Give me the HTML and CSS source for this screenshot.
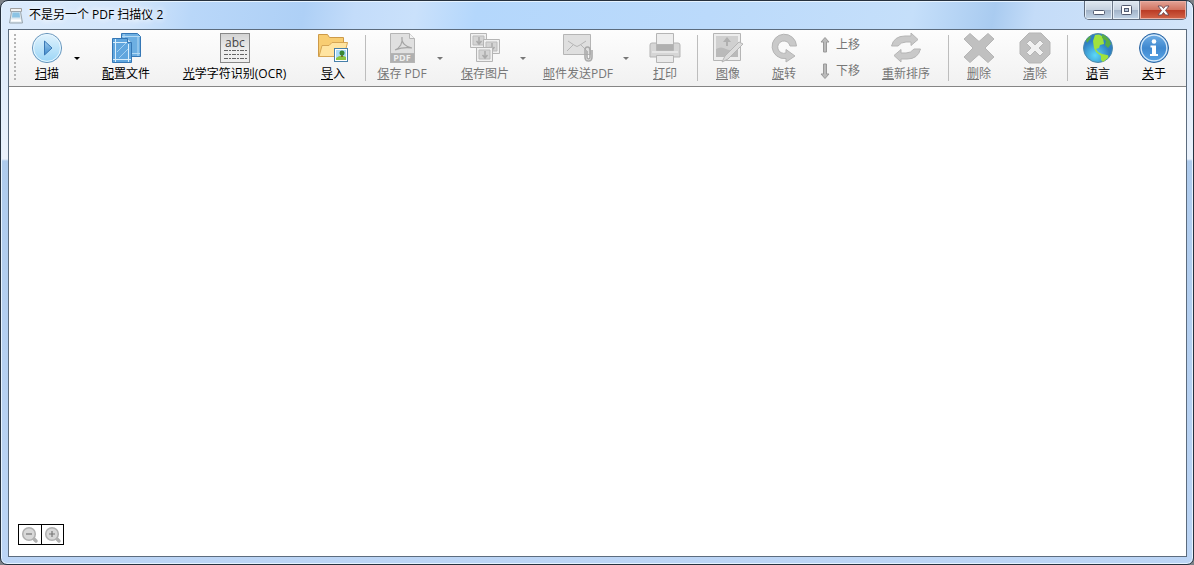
FILE: index.html
```html
<!DOCTYPE html>
<html lang="zh-CN">
<head>
<meta charset="utf-8">
<meta name="viewport" content="width=device-width, initial-scale=1">
<title>不是另一个 PDF 扫描仪 2</title>
<link rel="stylesheet" href="styles.css">
</head>
<body>
<div class="window">
  <header class="titlebar">
    <svg class="app-icon" viewBox="0 0 16 17"><path d="M2.500 1.500h11v3h-11z" fill="#f2f2f2" stroke="#a0a0a0"/><path d="M3.500 4.500h9l2 11.500h-13z" fill="#dce7ef" stroke="#9aa6af"/><path d="M4.500 5.500h7l.5 5h-8z" fill="#8bc3e4"/><path d="M3 13.500h10" stroke="#fff" stroke-width="2"/></svg>
    <h1 class="title">不是另一个 PDF 扫描仪 2</h1>
    <div class="caption">
      <button class="cap" type="button" aria-label="最小化"><svg width="14" height="10" viewBox="0 0 14 10"><rect x="1.500" y="5.500" width="11" height="4" rx="1" fill="#fff" stroke="#535b70"/></svg></button>
      <button class="cap" type="button" aria-label="还原"><svg width="13" height="10" viewBox="0 0 13 10"><rect x="1.500" y=".5" width="10" height="9" rx="1" fill="#fff" stroke="#535b70"/><rect x="4.500" y="3.500" width="4" height="3" fill="#b9c8da" stroke="#535b70"/></svg></button>
      <button class="cap cap-close" type="button" aria-label="关闭"><svg width="13" height="11" viewBox="0 0 13 11"><path d="M1 1h3.500l2 2.500L8.500 1H12L8.500 5.500 12 10H8.500l-2-2.500-2 2.500H1l3.500-4.500z" fill="#fff" stroke="#694853" stroke-width=".9"/></svg></button>
    </div>
  </header>

  <main class="client">
    <div class="toolbar" role="toolbar">
      <span class="grip"></span>
      <div class="split">
        <button class="tool tool-xs" type="button">
          <svg class="icon" viewBox="0 0 32 32"><defs><linearGradient id="scan" x2="0" y2="1"><stop stop-color="#e2f3fd"/><stop offset="1" stop-color="#9ad5f6"/></linearGradient><linearGradient id="tri" x2="0" y2="1"><stop stop-color="#9fcdef"/><stop offset="1" stop-color="#3f8acb"/></linearGradient></defs><circle cx="16" cy="16" r="14.600" fill="url(#scan)" stroke="#6b97bd"/><circle cx="16" cy="16" r="13.400" fill="none" stroke="#e6f6ff"/><path d="M13.500 9v14l7.500-7z" fill="url(#tri)" stroke="#3a78b5"/></svg>
          <span class="label"><u>扫</u>描</span></button>
        <button class="drop" type="button" aria-label="扫描选项"></button>
      </div>
      <button class="tool tool-l" type="button">
        <svg class="icon" viewBox="0 0 32 32"><g stroke="#3577b5"><path d="M11.500 1.500h16l3 3v20h-19z" fill="#6dafe2"/><path d="M14 2v22M28 4v20M12 4.500h18M12 21.500h18" stroke="#b5daf4"/><path d="M2.500 6.500h15l4 4v20h-19z" fill="#60a6de"/><path d="M17.500 6.500v4h4" fill="#c8e5f8"/></g><g fill="none" stroke="#d9eefb"><path d="M5.500 7v23M18.500 12v18M3 10.500h14M3 27.500h18"/><path d="M7 20l9-9M9 26l9-9" stroke="#a3d0f1"/></g></svg>
        <span class="label"><u>配</u>置文件</span></button>
      <button class="tool tool-xxl" type="button">
        <svg class="icon" viewBox="0 0 32 32"><defs><linearGradient id="paper" x2="0" y2="1"><stop stop-color="#d2d2d2"/><stop offset=".6" stop-color="#efefef"/></linearGradient></defs><rect x="1.500" y="1.500" width="29" height="29" fill="url(#paper)" stroke="#888"/><text class="icon-abc" x="16" y="15" text-anchor="middle">abc</text><path d="M5 18.500h23M5 22.500h23M5 26.500h23" stroke="#666" stroke-dasharray="4 1 2 1"/></svg>
        <span class="label"><u>光</u>学字符识别(OCR)</span></button>
      <button class="tool" type="button">
        <svg class="icon" viewBox="0 0 32 32"><path d="M1.500 24.500v-22h9l2 3h14v18z" fill="#f8cd72" stroke="#cd9a48"/><path d="M2 24.500l3-11h7l3-3h15.500l-3.500 14z" fill="#ffe4a0" stroke="#d6a655"/><rect x="17.500" y="16.500" width="13" height="13" fill="#fff" stroke="#477fa9"/><path d="M19 18h10v10H19z" fill="#a9dbf7"/><path d="M19 26q5-4 10-1v3H19z" fill="#8cc540"/><path d="M25 25v-3" stroke="#6d5021" stroke-width="1.500"/><circle cx="25" cy="21" r="2.500" fill="#378833"/></svg>
        <span class="label"><u>导</u>入</span></button>
      <span class="sep"></span>
      <div class="split">
        <button class="tool tool-m" type="button" disabled>
          <svg class="icon gray" viewBox="0 0 32 32"><path d="M4.500 1.500h19l5 5v24h-24z" fill="#e0e0e0"/><path d="M23.500 1.500v5h5" fill="#f3f3f3"/><path d="M9 18c5-2 8-7 7-13-1 6 4 10 10 11-6-1-12 0-17 2z" fill="none" stroke="#a5a5a5" stroke-width="1.200"/><path d="M4.500 21.500h24v9h-24z" fill="#b0b0b0"/><text class="icon-pdf" x="16" y="29" text-anchor="middle">PDF</text></svg>
          <span class="label"><u>保</u>存 PDF</span></button>
        <button class="drop" type="button" disabled aria-label="保存 PDF 选项"></button>
      </div>
      <div class="split">
        <button class="tool tool-m" type="button" disabled>
          <svg class="icon gray" viewBox="0 0 32 32"><g id="photo"><path d="M1.500 1.500h16v14h-16z" fill="#f0f0f0"/><path d="M4 4h11v9H4z" fill="#d4d4d4" stroke="#bbb"/><path d="M10 12V5M7.500 9l2.500 3 2.500-3" fill="none" stroke="#aaa" stroke-width="1.500"/></g><use href="#photo" x="13" y="6"/><use href="#photo" x="6" y="14"/></svg>
          <span class="label"><u>保</u>存图片</span></button>
        <button class="drop" type="button" disabled aria-label="保存图片选项"></button>
      </div>
      <div class="split">
        <button class="tool tool-xl" type="button" disabled>
          <svg class="icon gray" viewBox="0 0 32 32"><path d="M1.500 2.500h27v20h-27z" fill="#dfdfdf"/><path d="M6 9l6 4q3 3 6 0l6-4M5 19l6-6M25 19l-6-6" fill="none" stroke="#b5b5b5"/><path d="M25 19v6q0 2 1.500 2t1.500-2v-7q0-3-2.500-3T23 18v7q0 4 3.500 4t3.500-4v-7" fill="none" stroke="#aaa" stroke-width="1.600"/></svg>
          <span class="label"><u>邮</u>件发送PDF</span></button>
        <button class="drop" type="button" disabled aria-label="邮件选项"></button>
      </div>
      <button class="tool" type="button" disabled>
        <svg class="icon gray" viewBox="0 0 32 32"><path d="M3 11h26q2 0 2 2v12H1V13q0-2 2-2z" fill="#d6d6d6"/><path d="M7.500 1.500h17v11h-17z" fill="#ededed"/><path d="M7.500 12.500h17v6h-17z" fill="#b0b0b0"/><path d="M3 20h26" stroke="#e6e6e6" stroke-width="2"/><path d="M7.500 23.500h17v7h-17z" fill="#e9e9e9"/></svg>
        <span class="label"><u>打</u>印</span></button>
      <span class="sep"></span>
      <button class="tool" type="button" disabled>
        <svg class="icon gray" viewBox="0 0 32 32"><path d="M1.500 1.500h27v27h-27z" fill="#ededed"/><g stroke="none"><path d="M4 4h22v21H4z" fill="#d0d0d0"/><path d="M4 17q5-3 10 0t12-2v10H4z" fill="#bababa"/><path d="M14 14v-4h-3l4-5 4 5h-3v4z" fill="#b0b0b0"/></g><path d="M13 24L27 10l4 2-15 15-6 3z" fill="#dcdcdc"/></svg>
        <span class="label"><u>图</u>像</span></button>
      <button class="tool" type="button" disabled>
        <svg class="icon gray" viewBox="0 0 32 32"><path d="M18 30v-3.500A12.200 12.200 0 1 1 28.500 14H22a6.200 6.200 0 1 0-4 7v-3.500l9 6.500z" fill="#c9c9c9"/></svg>
        <span class="label"><u>旋</u>转</span></button>
      <div class="moves">
        <button class="move" type="button" disabled><svg class="arrow gray" viewBox="0 0 12 18"><path d="M6 1.500l4 4.500H7.500v10h-3V6H2z" fill="#bbb" stroke="#999"/></svg>上移</button>
        <button class="move" type="button" disabled><svg class="arrow gray" viewBox="0 0 12 18"><path d="M6 16.500l4-4.500H7.500V2h-3v10H2z" fill="#bbb" stroke="#999"/></svg>下移</button>
      </div>
      <button class="tool tool-l" type="button" disabled>
        <svg class="icon gray" viewBox="0 0 32 32"><path d="M1.500 14Q4 4 15 4h6V1l7 6.500-7 6V10h-5q-5 0-8 4z" fill="#c9c9c9"/><path d="M30.500 17Q28 27 17 27h-6v3l-7-6.500 7-6V21h5q5 0 8-4z" fill="#c9c9c9"/></svg>
        <span class="label"><u>重</u>新排序</span></button>
      <span class="sep"></span>
      <button class="tool" type="button" disabled>
        <svg class="icon gray" viewBox="0 0 32 32"><path d="M7 1.500l9 8 9-8 6 5.500-9 9 9 9-6 5.500-9-8-9 8L1 25l9-9-9-9z" fill="#c0c0c0"/></svg>
        <span class="label"><u>删</u>除</span></button>
      <button class="tool" type="button" disabled>
        <svg class="icon gray" viewBox="0 0 32 32"><path d="M10 1h12l9 9v12l-9 9H10l-9-9V10z" fill="#c0c0c0"/><path d="M11 8l5 5 5-5 3.500 3.500L20 16l4.500 4.500L21 24l-5-5-5 5-3.500-3.500L12 16l-4.500-4.500z" fill="#f1f1f1"/></svg>
        <span class="label"><u>清</u>除</span></button>
      <span class="sep"></span>
      <button class="tool" type="button">
        <svg class="icon" viewBox="0 0 32 32"><defs><radialGradient id="sea" cx=".4" cy=".75"><stop stop-color="#5cd8f7"/><stop offset="1" stop-color="#2f80c4"/></radialGradient></defs><circle cx="16" cy="16" r="14.500" fill="url(#sea)" stroke="#4f8aa9"/><path d="M13 3q6-2 8 3l1 6-4 1-1 3-3 1 2 3 4 2 5 1q2 0 1 3l-5 4-2-2v-4l-5-4-2-4-1-7z" fill="#a0e23c"/><path d="M20 2q7 3 9 10l-3 4-3-3 1-4-4-3zM4 8l4-4 1 2-4 5z" fill="#58ad45"/></svg>
        <span class="label"><u>语</u>言</span></button>
      <button class="tool" type="button">
        <svg class="icon" viewBox="0 0 32 32"><defs><linearGradient id="info" x2="0" y2="1"><stop stop-color="#73b1e8"/><stop offset=".5" stop-color="#3f88cf"/><stop offset="1" stop-color="#5ba6e6"/></linearGradient></defs><circle cx="16" cy="16" r="14.500" fill="url(#info)" stroke="#2f65a0"/><circle cx="16" cy="16" r="12.900" fill="none" stroke="#d7eafa" stroke-width="1.300"/><circle cx="16" cy="9.500" r="2.300" fill="#fff"/><path d="M12.500 13.500H18V22h2v2h-8v-2h2v-6.500h-1.500z" fill="#fff"/></svg>
        <span class="label"><u>关</u>于</span></button>
    </div>
    <section class="pages">
      <div class="zoom">
        <button class="zoom-btn" type="button" disabled aria-label="缩小"><svg width="18" height="18" viewBox="0 0 18 18"><path d="M12 12l3 3" stroke="#b0b0b0" stroke-width="3.500" stroke-linecap="round"/><circle cx="8" cy="8" r="6.300" fill="#d8d8d8" stroke="#b0b0b0" stroke-width="1.500"/><path d="M5 8h6" stroke="#777" stroke-width="1.200"/></svg></button>
        <button class="zoom-btn" type="button" disabled aria-label="放大"><svg width="18" height="18" viewBox="0 0 18 18"><path d="M12 12l3 3" stroke="#b0b0b0" stroke-width="3.500" stroke-linecap="round"/><circle cx="8" cy="8" r="6.300" fill="#d8d8d8" stroke="#b0b0b0" stroke-width="1.500"/><path d="M5 8h6M8 5v6" stroke="#777" stroke-width="1.200"/></svg></button>
      </div>
    </section>
  </main>
</div>
</body>
</html>
```

FILE: styles.css
```css
* { box-sizing: border-box; }
body {
  margin: 0;
  background: #7d8288;
  font: 12px/16px "Open Sans", "Noto Sans CJK SC", sans-serif;
  color: #000;
}
button {
  margin: 0;
  padding: 0;
  border: 0;
  background: none;
  font: inherit;
  color: inherit;
}
button:disabled { color: #777; }
svg { display: block; flex: none; }

.window {
  display: flex;
  flex-direction: column;
  height: 100vh;
  padding: 0 6px 7px 7px;
  border: 1px solid #26313e;
  border-radius: 8px 8px 7px 7px;
  box-shadow: inset 0 0 0 1px #e6f3ff;
  background:
    linear-gradient(100deg, #dcebfc 0, #d2e5fb 130px, #b9d7f9 190px, #aed0f6 300px, #c3dcfa 350px, #cae1fb 410px, #b4d7fc 470px, #bbdafb 700px, #c5dffa 900px, #a9cbf0 980px, #c4dcf8 1020px, #d5e6fa 1194px) top / 100% 29px no-repeat,
    linear-gradient(#d9e8fa, #eaf2fc 158px, #aecbed 160px, #bcd5f5);
}
.titlebar {
  display: flex;
  align-items: center;
  height: 28px;
  flex: none;
}
.app-icon { width: 16px; height: 17px; }
.title {
  flex: 1;
  margin: 0 0 0 5px;
  font-size: 12px;
  font-weight: 400;
  line-height: 16px;
  text-shadow: 0 0 6px #fff, 0 0 6px #fff;
}
.caption {
  display: flex;
  align-self: flex-start;
  height: 19px;
  border: 1px solid #5f6b7c;
  border-top: 0;
  border-radius: 0 0 5px 5px;
  overflow: hidden;
}
.cap {
  display: flex;
  align-items: center;
  justify-content: center;
  width: 28px;
  border-right: 1px solid #6d7888;
  background: linear-gradient(#e0e8f1, #c5d1df 50%, #a1b2c7 50%, #c3d5e8);
  box-shadow: inset 0 0 0 1px #e4edf6;
}
.cap + .cap { width: 27px; }
.cap + .cap-close {
  width: 46px;
  border-right: 0;
  background: linear-gradient(#e3a497, #d1725f 50%, #b93923 50%, #d36549);
  box-shadow: inset 0 0 0 1px #e9aea3;
}

.client {
  display: flex;
  flex-direction: column;
  flex: 1;
  min-height: 0;
  border: 1px solid #5c6c7e;
  background: #fff;
}
.toolbar {
  display: flex;
  align-items: stretch;
  height: 57px;
  flex: none;
  padding-left: 5px;
  background: linear-gradient(#fdfdfd, #f1f1f1);
  border-bottom: 1px solid #858585;
  white-space: nowrap;
}
.grip {
  width: 2px;
  margin: 4px 5px 6px 0;
  background: repeating-linear-gradient(#b5b5b5 0 2px, transparent 2px 4px);
}
.tool {
  display: flex;
  flex-direction: column;
  align-items: center;
  flex: none;
  width: 56px;
  padding-top: 2px;
}
.tool-xs { width: 52px; }
.tool-m { width: 68px; }
.tool-l { width: 76px; }
.tool-xl { width: 88px; }
.tool-xxl { width: 141px; }
.icon { width: 32px; height: 32px; }
.gray { stroke: #b5b5b5; }
.gray text { stroke: none; }
.icon-abc { font: 12px "Open Sans", sans-serif; fill: #444; }
.icon-pdf { font: 700 9px "Open Sans", sans-serif; fill: #eee; }
.label { margin-top: 2px; }
.split { display: flex; margin-right: 7px; }
.drop {
  display: flex;
  align-items: center;
  justify-content: center;
  width: 8px;
}
.drop::after {
  content: "";
  border: 3px solid transparent;
  border-top-color: currentColor;
  border-bottom: 0;
}
.sep {
  width: 1px;
  margin: 5px 2px 5px 4px;
  background: #bdbdbd;
}
.moves {
  display: flex;
  flex-direction: column;
  gap: 8px;
  width: 56px;
  padding: 6px 0 0 7px;
}
.move {
  display: flex;
  align-items: center;
  gap: 5px;
  height: 18px;
}
.arrow { width: 12px; height: 18px; }
.pages {
  display: flex;
  align-items: flex-end;
  flex: 1;
  padding: 0 9px 11px;
}
.zoom { display: flex; border: 1px solid #000; }
.zoom-btn {
  display: grid;
  place-items: center;
  width: 22px;
  height: 19px;
}
.zoom-btn + .zoom-btn { border-left: 1px solid #000; }
```
